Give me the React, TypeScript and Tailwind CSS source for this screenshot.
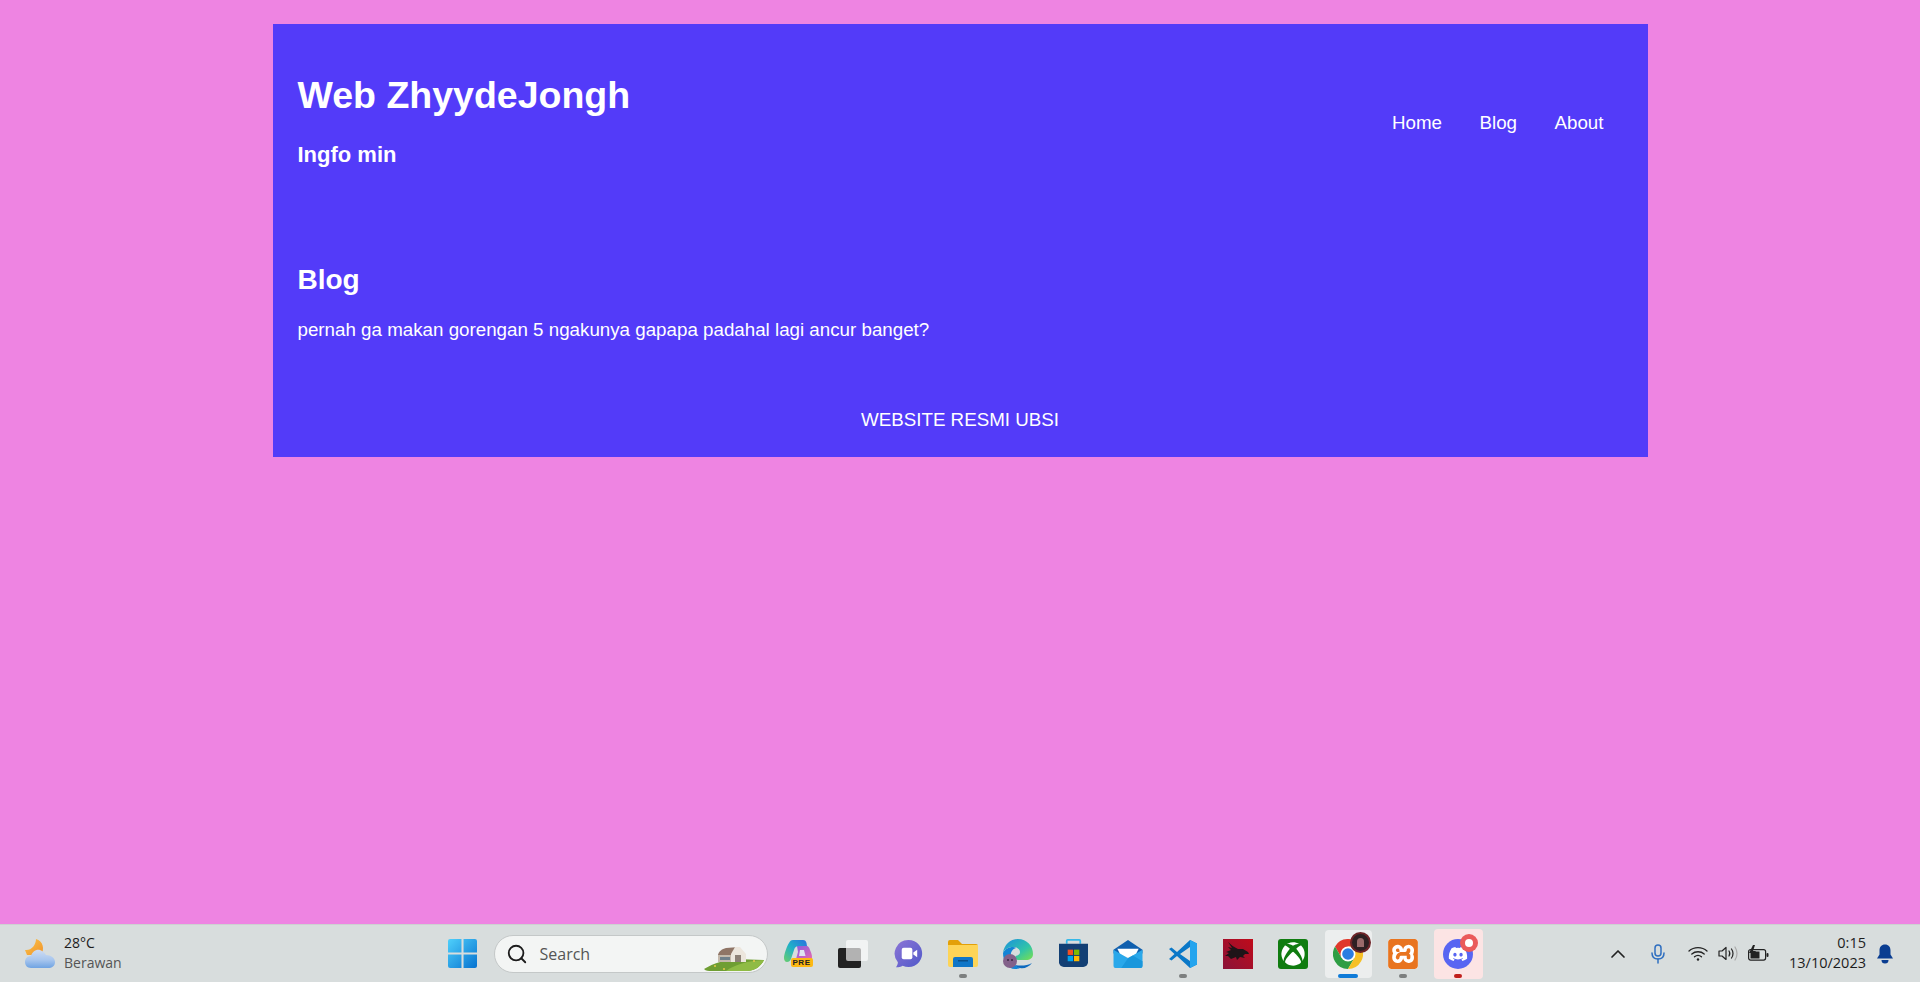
import { ChevronUp, Search } from "lucide-react";
import { FaDiscord, FaXbox } from "react-icons/fa";
import { SiXampp } from "react-icons/si";
import type { ReactNode } from "react";

const sans = "font-['Liberation_Sans',Arial,sans-serif]";
const ui = "font-['Open_Sans','Noto_Sans',sans-serif]";

function WeatherIcon() {
  return (
    <svg width="30" height="29" viewBox="0 0 30 29">
      <defs>
        <linearGradient id="cloud" x1="0" y1="0" x2="0" y2="1">
          <stop offset="0" stopColor="#cfdcf2" />
          <stop offset="0.55" stopColor="#a8c6ee" />
          <stop offset="1" stopColor="#6fa3e2" />
        </linearGradient>
        <linearGradient id="moon" x1="0" y1="0" x2="1" y2="1">
          <stop offset="0" stopColor="#fbc64a" />
          <stop offset="1" stopColor="#f0922a" />
        </linearGradient>
      </defs>
      <path d="M11 0c7 2 9 10 5 16H2L0 11c6 1 11-5 11-11z" fill="url(#moon)" />
      <path d="M6 29C2 29 0 26 0 23c0-4 3-6 6-6 1-4 5-7 9-6 3 1 5 3 6 5 5 0 9 3 9 7s-3 6-7 6z" fill="url(#cloud)" />
    </svg>
  );
}

function StartIcon() {
  return (
    <svg width="29" height="29" viewBox="1 1 28 28">
      <defs>
        <linearGradient id="win" x1="0" y1="0" x2="1" y2="1">
          <stop offset="0" stopColor="#4fd0fb" />
          <stop offset="1" stopColor="#0672d0" />
        </linearGradient>
      </defs>
      <path d="M1 3a2 2 0 0 1 2-2h11v13H1zM16 1h11a2 2 0 0 1 2 2v11H16zM1 16h13v13H3a2 2 0 0 1-2-2zM16 16h13v11a2 2 0 0 1-2 2H16z" fill="url(#win)" />
    </svg>
  );
}

function BarnIcon() {
  return (
    <svg width="60" height="27" viewBox="0 0 60 27">
      <path d="M0 24C10 18 20 15 32 14c8 0 18 1 28 1-3 6-8 10-16 11H8c-4 0-6 0-8-2z" fill="#6f9e33" />
      <path d="M22 26c8-6 20-10 38-11-3 6-8 10-16 11z" fill="#8fbb45" />
      <circle cx="11" cy="21" r="1" fill="#e6c84a" />
      <circle cx="20" cy="24" r="1" fill="#e6c84a" />
      <circle cx="50" cy="16" r="1" fill="#e6c84a" />
      <path d="M14 17V9h14v8z" fill="#c4b9ac" />
      <path d="M14 10c1-4 4-6 8-7l13-1-6 8z" fill="#8f7566" />
      <path d="M27 17V9l4-7h5l6 7v8z" fill="#ece6dd" />
      <rect x="31" y="10" width="6" height="7" fill="#8c8076" />
      <rect x="16" y="12" width="10" height="3" fill="#70808a" />
    </svg>
  );
}

function CopilotIcon() {
  return (
    <div className="relative h-[27px] w-[29px]">
      <svg width="28" height="22" viewBox="0 0 28 22">
        <defs>
          <linearGradient id="co1" x1="0" y1="1" x2="1" y2="0">
            <stop offset="0" stopColor="#6ccf6a" />
            <stop offset="0.5" stopColor="#1fb0c8" />
            <stop offset="1" stopColor="#2b6fe0" />
          </linearGradient>
          <linearGradient id="co2" x1="0" y1="0" x2="1" y2="1">
            <stop offset="0" stopColor="#7c5be8" />
            <stop offset="1" stopColor="#f06aa8" />
          </linearGradient>
        </defs>
        <path d="M13 6h10c1 0 2 1 3 4 1 2 2 5 2 7s-1 5-4 5H7c3 0 4-1 5-3l2-7z" fill="url(#co2)" />
        <path d="M16 10h4l1.500 6H15z" fill="#dfe4f0" />
        <path d="M9 0h10c2 0 3 1 3.500 3l.500 3h-8c-3 0-4 1-5 4L7 19c-1 2-2 3-4 3-2 0-3-2-3-4C0 14 3 6 5 3c1-2 2-3 4-3z" fill="url(#co1)" />
      </svg>
      <span className={`${sans} absolute bottom-0 left-[7px] flex h-[9px] w-[22px] items-center justify-center rounded-[2px] bg-[#fdb813] text-[8px] font-bold leading-none tracking-[0.5px] text-[#222]`}>PRE</span>
    </div>
  );
}

function TaskViewIcon() {
  return (
    <div className="relative h-[28px] w-[30px]">
      <div className="absolute bottom-0 left-0 h-[20px] w-[23px] rounded-[2px] bg-[#222]" />
      <div className="absolute right-0 top-0 h-[21px] w-[22px] rounded-[2px] bg-white/65" />
    </div>
  );
}

function MeetIcon() {
  return (
    <svg width="29" height="29" viewBox="0 0 30 30">
      <defs>
        <linearGradient id="meet" x1="0" y1="0" x2="1" y2="1">
          <stop offset="0" stopColor="#8c75d6" />
          <stop offset="1" stopColor="#5059c9" />
        </linearGradient>
      </defs>
      <path d="M15 1a14 14 0 1 1-6 26.600C7 28.800 4 29.500 2 29.300c1-1.300 2-3.300 2-5.300A14 14 0 0 1 15 1z" fill="url(#meet)" />
      <rect x="8" y="9" width="11" height="12" rx="2" fill="#fff" />
      <path d="M20 14l4-3v8l-4-3z" fill="#fff" />
    </svg>
  );
}

function ExplorerIcon() {
  return (
    <svg width="30" height="27" viewBox="0 0 30 27">
      <path d="M0 2a2 2 0 0 1 2-2h8l4 4h14a2 2 0 0 1 2 2v4H0z" fill="#e3a008" />
      <path d="M0 5h30v20a2 2 0 0 1-2 2H2a2 2 0 0 1-2-2z" fill="#fdd457" />
      <path d="M5 19a2 2 0 0 1 2-2h16a2 2 0 0 1 2 2v8H5z" fill="#0f76c8" />
      <rect x="10" y="20" width="10" height="1.500" fill="#0b4f8a" />
    </svg>
  );
}

function EdgeIcon() {
  return (
    <svg width="30" height="30" viewBox="0 0 30 30">
      <defs>
        <linearGradient id="edge" x1="0" y1="0" x2="1" y2="1">
          <stop offset="0" stopColor="#1a8fe0" />
          <stop offset="0.6" stopColor="#31c4a8" />
          <stop offset="1" stopColor="#7be04d" />
        </linearGradient>
      </defs>
      <path d="M15 0c9 0 15 7 15 15 0 4-3 6-7 6h-8c-2 0-3-1-3-2 0-3 5-2 5-6 0-3-3-5-7-5C5 8 1 11 0 14 1 6 7 0 15 0z" fill="url(#edge)" />
      <path d="M0 14c2-4 6-6 10-6 2 0 3 1 3 1-4 1-6 5-5 10 1 4 4 8 9 10-2 .7-3 1-5 1C5 30 0 22 0 14z" fill="#1384d6" />
      <path d="M29 24c-3 4-8 6-12 5-2-.4-4-2-5-3 5 1 12 1 17-2z" fill="#0c6abf" />
      <circle cx="7" cy="22" r="7" fill="#83618a" />
      <circle cx="5" cy="21" r="1" fill="#3b2a44" />
      <circle cx="9" cy="21" r="1" fill="#3b2a44" />
    </svg>
  );
}

function StoreIcon() {
  return (
    <svg width="29" height="29" viewBox="0 0 30 30">
      <path d="M8 5V2a1 1 0 0 1 1-1h12a1 1 0 0 1 1 1v3" fill="none" stroke="#35b8e8" strokeWidth="1.800" />
      <path d="M0 5h30v19a5 5 0 0 1-5 5H5a5 5 0 0 1-5-5z" fill="#123f74" />
      <rect x="9" y="11" width="5.500" height="5.500" fill="#f25022" />
      <rect x="15.500" y="11" width="5.500" height="5.500" fill="#7fba00" />
      <rect x="9" y="17.500" width="5.500" height="5.500" fill="#00a4ef" />
      <rect x="15.500" y="17.500" width="5.500" height="5.500" fill="#ffb900" />
    </svg>
  );
}

function MailIcon() {
  return (
    <svg width="30" height="28" viewBox="0 0 30 29">
      <path d="M0 10L15 0l15 10v4H0z" fill="#0f5fae" />
      <path d="M4 9h22l-3 6-8 3-8-3z" fill="#fff" />
      <path d="M0 10l15 9 15-9v17a2 2 0 0 1-2 2H2a2 2 0 0 1-2-2z" fill="#2aa8ea" />
      <path d="M30 27a2 2 0 0 1-2 2H8l7-10 5-3 10 6z" fill="#1a97dc" />
    </svg>
  );
}

function VsCodeIcon() {
  return (
    <svg width="30" height="30" viewBox="0 0 30 30">
      <path fillRule="evenodd" d="M29 4.500L22 1 9 13 3.500 8.600 1 10l5.500 5L1 20l2.500 1.400L9 17l13 12 7-3.500zM22 8l-10 7 10 7z" fill="#0a78c8" />
      <path d="M22 1l7 3.500v21L22 29z" fill="#24a4ee" />
    </svg>
  );
}

function MsiIcon() {
  return (
    <svg width="30" height="30" viewBox="0 0 30 30">
      <defs>
        <linearGradient id="msi" x1="0" y1="1" x2="1" y2="0">
          <stop offset="0" stopColor="#8a1238" />
          <stop offset="1" stopColor="#c00b1a" />
        </linearGradient>
      </defs>
      <rect width="30" height="30" fill="url(#msi)" />
      <path d="M5 3c3 3 6 5 10 7h5l5 3 1 2h-4l-2 2 2 2-5-1-3 3-1-3-5 2-3-3H2l4-3-3-1 5-2-3-3 4 1z" fill="#1e1418" />
    </svg>
  );
}

function XboxIcon() {
  return (
    <div className="flex h-[30px] w-[30px] items-center justify-center rounded-[3px] bg-[#107c10]">
      <FaXbox size={24} color="#fff" />
    </div>
  );
}

function ChromeIcon() {
  return (
    <div className="relative h-[30px] w-[30px]">
      <svg width="30" height="30" viewBox="0 0 30 30">
        <path d="M2 7.500A15 15 0 0 1 28 7.500H15L8.500 18.750z" fill="#e0392b" />
        <path d="M2 7.500A15 15 0 0 0 15 30L21.500 18.750H8.500z" fill="#2f9e44" />
        <path d="M15 30A15 15 0 0 0 28 7.500H15L21.500 18.750z" fill="#f6c026" />
        <circle cx="15" cy="15" r="7.500" fill="#fff" />
        <circle cx="15" cy="15" r="5.800" fill="#2a7de1" />
      </svg>
      <div className="absolute right-[-8px] top-[-7px] flex h-[21px] w-[21px] items-center justify-center rounded-full border-2 border-[#6e2428] bg-[#2e2022]">
        <div className="h-[9px] w-[7px] rounded-t-full bg-[#9a6a6a]" />
      </div>
    </div>
  );
}

function XamppIcon() {
  return (
    <div className="h-[30px] w-[30px] overflow-hidden rounded-[3px] bg-white">
      <SiXampp size={30} color="#e8741f" />
    </div>
  );
}

function DiscordIcon() {
  return (
    <div className="relative flex h-[30px] w-[30px] items-center justify-center rounded-full bg-[#5865f2]">
      <FaDiscord size={20} color="#fff" />
      <div className="absolute right-[-5px] top-[-5px] flex h-[18px] w-[18px] items-center justify-center rounded-full bg-[#ea5a5a]">
        <div className="h-[8px] w-[8px] rounded-full bg-white" />
      </div>
    </div>
  );
}

function TaskIcon({ children, dot, tile }: { children: ReactNode; dot?: string; tile?: string }) {
  return (
    <div className="relative flex h-[50px] w-[55px] items-center justify-center">
      {tile ? <div className={`absolute rounded-[4px] ${tile}`} /> : null}
      <div className="relative">{children}</div>
      {dot ? <div className={`absolute bottom-[1px] left-1/2 h-[4px] -translate-x-1/2 rounded-full ${dot}`} /> : null}
    </div>
  );
}

function WifiIcon() {
  return (
    <svg width="20" height="15" viewBox="0 0 20 15" fill="none" stroke="#222" strokeWidth="1.300" strokeLinecap="round">
      <path d="M1 5c5-4.500 13-4.500 18 0" />
      <path d="M3.800 8c3.500-3 9-3 12.400 0" />
      <path d="M6.500 10.800c2-1.700 5-1.700 7 0" />
      <circle cx="10" cy="13.500" r="1.200" fill="#222" stroke="none" />
    </svg>
  );
}

function VolumeIcon() {
  return (
    <svg width="20" height="15" viewBox="0 0 20 15" fill="none" stroke="#222" strokeWidth="1.200" strokeLinecap="round" strokeLinejoin="round">
      <path d="M1 5h3l4-3.500v12L4 10H1z" />
      <path d="M11 5c1 1.500 1 3.500 0 5" />
      <path d="M13.500 3c2 2.500 2 6.500 0 9" />
      <path d="M17 1c2.500 4 2.500 9 0 13" stroke="#aaa" />
    </svg>
  );
}

function BatteryIcon() {
  return (
    <svg width="21" height="17" viewBox="0 0 21 17">
      <rect x="0.600" y="4.600" width="17" height="10.500" rx="2" fill="none" stroke="#222" strokeWidth="1.200" />
      <rect x="18.500" y="8" width="2" height="4" rx="1" fill="#222" />
      <rect x="2.500" y="6.500" width="9" height="7" fill="#222" />
      <path d="M5 0L1 8h3l-1 5 5-7H5l2-6z" fill="#222" />
    </svg>
  );
}

function BellIcon() {
  return (
    <svg width="16" height="20" viewBox="0 0 16 19">
      <path d="M8 0c3.500 0 5.500 2.500 5.500 6v4l2.500 4H0l2.500-4V6C2.500 2.500 4.500 0 8 0z" fill="#0a3d91" />
      <path d="M4.500 15.500h7a3.500 3.500 0 0 1-7 0z" fill="#0a3d91" />
    </svg>
  );
}

function MicIcon() {
  return (
    <svg width="16" height="20" viewBox="0 0 16 20" fill="none" stroke="#2f6fc0" strokeWidth="1.500" strokeLinecap="round">
      <rect x="5" y="1" width="6" height="11" rx="3" />
      <path d="M2 9c0 4 2.500 6 6 6s6-2 6-6" />
      <path d="M8 15v4" />
    </svg>
  );
}

function Taskbar() {
  return (
    <footer className={`${ui} grid h-[58px] shrink-0 grid-cols-[1fr_auto_1fr] items-center border-t border-[#cdd1d1] bg-[#d8dddd]`}>
      <div className="flex items-center pl-[25px]">
        <WeatherIcon />
        <div className="mb-[2px] ml-[9px] text-[14px] leading-[20px]">
          <p className="text-[#1c1c1c]">28°C</p>
          <p className="text-[#555]">Berawan</p>
        </div>
      </div>
      <div className="flex items-center">
        <TaskIcon><StartIcon /></TaskIcon>
        <div className="ml-[4px] mr-[3px] flex h-[38px] w-[274px] items-center justify-between overflow-hidden rounded-full border border-[#c4c8c8] bg-[#f3f5f4] pl-[11px] pr-[3px]">
          <div className="flex items-center">
            <Search size={22} strokeWidth={2} className="text-[#1c1c1c]" />
            <span className="ml-[12px] text-[16px] text-[#555]">Search</span>
          </div>
          <div className="self-end"><BarnIcon /></div>
        </div>
        <TaskIcon><CopilotIcon /></TaskIcon>
        <TaskIcon><TaskViewIcon /></TaskIcon>
        <TaskIcon><MeetIcon /></TaskIcon>
        <TaskIcon dot="w-[8px] bg-[#7d8080]"><ExplorerIcon /></TaskIcon>
        <TaskIcon><EdgeIcon /></TaskIcon>
        <TaskIcon><StoreIcon /></TaskIcon>
        <TaskIcon><MailIcon /></TaskIcon>
        <TaskIcon dot="w-[8px] bg-[#7d8080]"><VsCodeIcon /></TaskIcon>
        <TaskIcon><MsiIcon /></TaskIcon>
        <TaskIcon><XboxIcon /></TaskIcon>
        <TaskIcon dot="w-[20px] bg-[#0f7bd8]" tile="inset-x-[4px] inset-y-[1px] bg-[#eceeee]"><ChromeIcon /></TaskIcon>
        <TaskIcon dot="w-[8px] bg-[#7d8080]"><XamppIcon /></TaskIcon>
        <TaskIcon dot="w-[8px] bg-[#c0201c]" tile="inset-x-[3px] inset-y-0 bg-[#fce4e4]"><DiscordIcon /></TaskIcon>
      </div>
      <div className="flex items-center justify-end pr-[27px]">
        <ChevronUp size={24} strokeWidth={1.700} className="text-[#222]" />
        <div className="ml-[20px]"><MicIcon /></div>
        <div className="ml-[22px]"><WifiIcon /></div>
        <div className="ml-[10px]"><VolumeIcon /></div>
        <div className="ml-[10px]"><BatteryIcon /></div>
        <div className="mb-[2px] ml-[20px] text-right text-[14.500px] leading-[20px] text-[#1c1c1c]">
          <p>0:15</p>
          <p>13/10/2023</p>
        </div>
        <div className="ml-[11px]"><BellIcon /></div>
      </div>
    </footer>
  );
}

export default function App() {
  return (
    <div className={`${sans} flex h-screen flex-col bg-[#ee84e2] text-white`}>
      <main className="flex-1 pt-[24px]">
        <div className="mx-auto w-[1375px] bg-[#533bf9] px-[25px] pb-[25px]">
          <header className="flex items-center justify-between pb-[92px] pt-[48px]">
            <div>
              <h1 className="text-[37.500px] font-bold leading-[46px]">Web ZhyydeJongh</h1>
              <h2 className="mt-[22px] text-[22px] font-bold leading-[30px]">Ingfo min</h2>
            </div>
            <nav className="mt-[4px] flex gap-[37.500px] pr-[19px] text-[18.750px]">
              <a>Home</a>
              <a>Blog</a>
              <a>About</a>
            </nav>
          </header>
          <section>
            <h2 className="text-[28px] font-bold leading-[36px]">Blog</h2>
            <p className="mt-[20px] text-[18.750px] leading-[24px]">pernah ga makan gorengan 5 ngakunya gapapa padahal lagi ancur banget?</p>
          </section>
          <footer className="mt-[66px] text-center text-[18.750px] leading-[24px]">WEBSITE RESMI UBSI</footer>
        </div>
      </main>
      <Taskbar />
    </div>
  );
}
